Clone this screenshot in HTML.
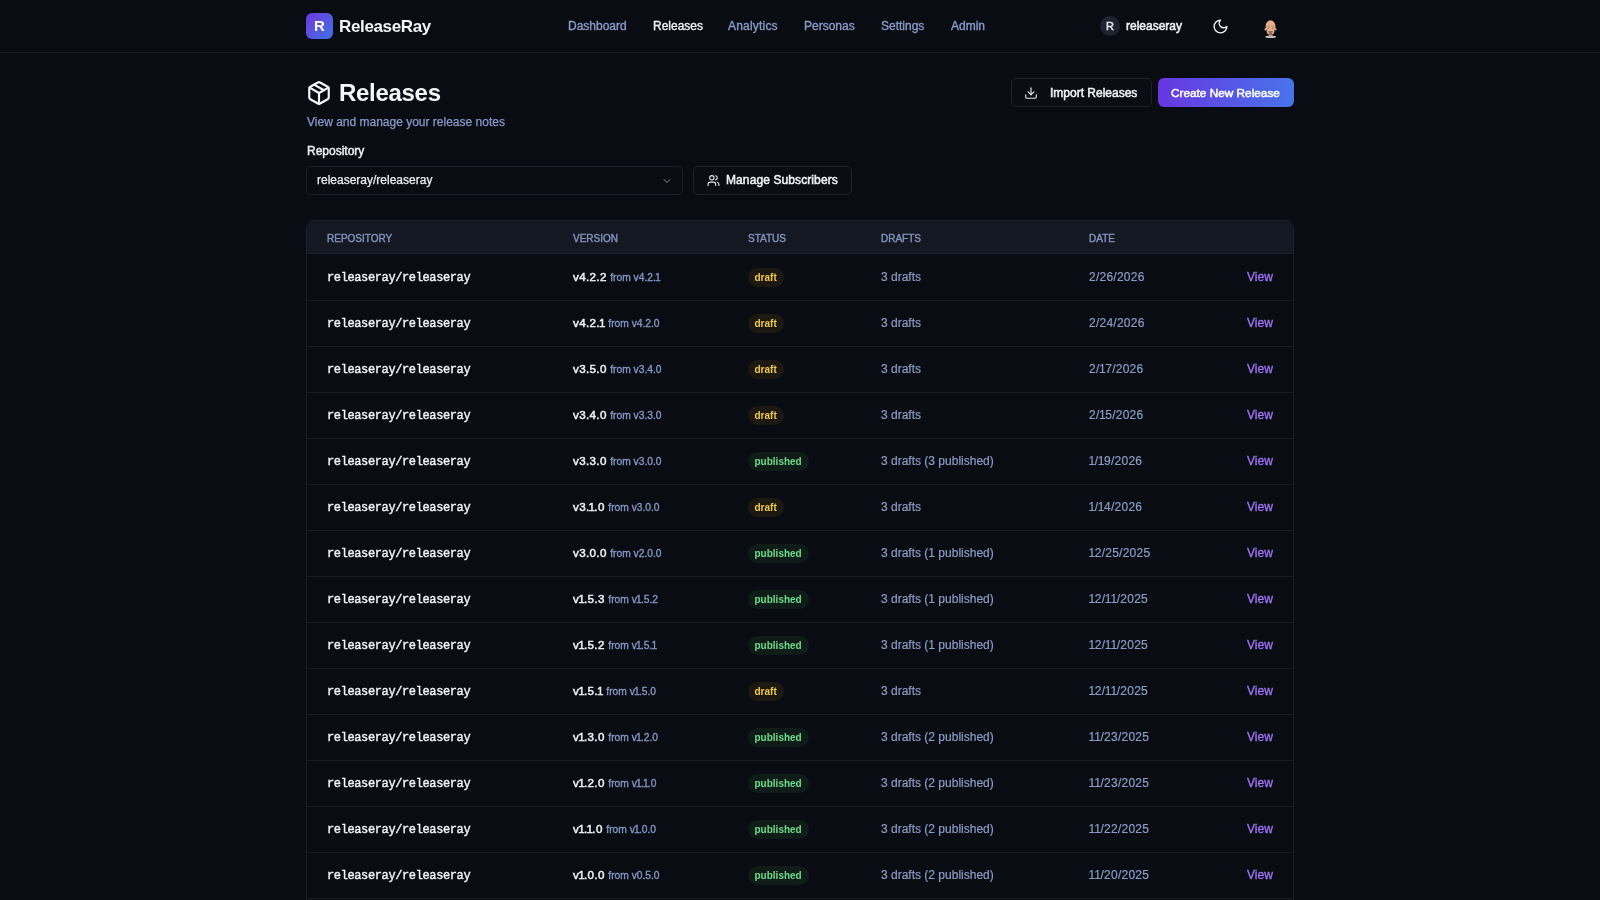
<!DOCTYPE html>
<html><head><meta charset="utf-8">
<style>
*{box-sizing:border-box;margin:0;padding:0}
html,body{width:1600px;height:900px;overflow:hidden;background:#090c13;font-family:"Liberation Sans",sans-serif;color:#f0f1f4}
.wrap{position:absolute;left:0;top:0;width:1600px;height:900px;will-change:transform}
.abs{position:absolute}
.hdr{position:absolute;left:0;top:0;width:1600px;height:53px;border-bottom:1px solid #171b24}
.logo{position:absolute;left:306px;top:13px;width:27px;height:26px;border-radius:6px;background:linear-gradient(135deg,#6f38de,#3f73e6);color:#fff;font-weight:bold;font-size:15px;line-height:26px;text-align:center}
.brand{position:absolute;left:339px;top:15px;font-size:17px;font-weight:bold;line-height:24px;letter-spacing:-0.35px;color:#f4f4f6}
.nav{position:absolute;top:18px;font-size:12px;line-height:16px;color:#8a9cc8;-webkit-text-stroke:0.35px currentColor}
.nav.act{color:#f4f4f6}
.ava{position:absolute;left:1100px;top:16px;width:20px;height:20px;border-radius:50%;background:#1d2330;color:#e4e6ea;font-size:11px;line-height:20px;text-align:center;-webkit-text-stroke:0.5px currentColor}
.uname{position:absolute;left:1126px;top:18px;font-size:12px;line-height:16px;color:#f4f4f6;-webkit-text-stroke:0.5px currentColor}
.title{position:absolute;left:339px;top:79px;font-size:24px;font-weight:bold;line-height:28px;letter-spacing:-0.3px;color:#f6f6f8}
.sub{position:absolute;left:307px;top:115px;font-size:12px;line-height:14px;color:#889bc9;-webkit-text-stroke:0.25px currentColor}
.lbl{position:absolute;left:307px;top:144px;font-size:12px;line-height:14px;color:#eef0f3;-webkit-text-stroke:0.45px currentColor}
.btn{position:absolute;border:1px solid #1f2431;border-radius:5px;background:#0a0d14;font-size:12px;color:#f2f3f5;-webkit-text-stroke:0.5px currentColor}
.sel{position:absolute;left:306px;top:166px;width:377px;height:29px;border:1px solid #1c2130;border-radius:5px;background:#090c13}
.seltxt{position:absolute;left:10px;top:6px;font-size:12px;line-height:14px;color:#eef0f3;-webkit-text-stroke:0.25px currentColor}
.create{position:absolute;left:1158px;top:78px;width:136px;height:29px;border-radius:6px;background:linear-gradient(90deg,#6737e0,#4874eb);font-size:11.8px;color:#fff;-webkit-text-stroke:0.5px currentColor}
.tbl{position:absolute;left:306px;top:220px;width:988px;height:700px;border:1px solid #1a1e29;border-radius:8px;overflow:hidden}
.th{position:absolute;left:0;top:0;width:100%;height:33px;background:#141823;border-bottom:1px solid #1b1f2b}
.thc{position:absolute;top:12px;font-size:10px;line-height:12px;color:#8393bc;-webkit-text-stroke:0.4px currentColor}
.row{position:absolute;left:0;width:100%;height:46px;border-bottom:1px solid #181c26}
.repo{position:absolute;left:20px;top:16px;font-family:"Liberation Mono",monospace;font-size:12px;letter-spacing:-0.38px;line-height:14px;color:#f4f5f7;-webkit-text-stroke:0.4px currentColor}
.ver{position:absolute;left:266px;top:15px;font-size:11.6px;letter-spacing:0.35px;line-height:14px;color:#eef0f3;white-space:nowrap;-webkit-text-stroke:0.5px #eef0f3}
i{font-style:normal;margin:0 -1px}
.ver span i{margin:0 -0.8px}
.date i{margin:0 -0.6px}
.ver span{font-size:10.25px;letter-spacing:0;color:#8597c4;-webkit-text-stroke:0.35px #8597c4}
.badge{position:absolute;left:441px;top:12.5px;height:19px;border-radius:10px;padding:0 7px 0 6.5px;font-size:10px;font-weight:bold;line-height:19px}
.draft{background:#1d1912;color:#f0ca44}
.pub{background:#0f1c17;color:#6bdd8c}
.drf{position:absolute;left:574px;top:15px;font-size:12px;line-height:14px;color:#8c9dc6;-webkit-text-stroke:0.2px currentColor}
.date{position:absolute;left:782px;top:15px;font-size:12px;line-height:14px;color:#8c9dc6;letter-spacing:0.25px;-webkit-text-stroke:0.2px currentColor}
.view{position:absolute;left:940px;top:15px;font-size:12px;line-height:14px;color:#a475fa;-webkit-text-stroke:0.3px currentColor}
</style></head>
<body><div class="wrap">
<div class="hdr"></div>
<div class="logo">R</div>
<div class="brand">ReleaseRay</div>
<div class="nav" style="left:568px">Dashboard</div>
<div class="nav act" style="left:653px">Releases</div>
<div class="nav" style="left:728px;letter-spacing:0.2px">Analytics</div>
<div class="nav" style="left:804px">Personas</div>
<div class="nav" style="left:881px">Settings</div>
<div class="nav" style="left:951px">Admin</div>
<div class="ava">R</div>
<div class="uname">releaseray</div>
<svg class="abs" style="left:1212px;top:17.8px" width="17" height="17" viewBox="0 0 24 24" fill="none" stroke="#f2f2f4" stroke-width="2" stroke-linecap="round" stroke-linejoin="round"><path d="M12 3a6 6 0 0 0 9 9 9 9 0 1 1-9-9Z"/></svg>
<svg class="abs" style="left:1260px;top:17px" width="22" height="24" viewBox="0 0 22 24">
<ellipse cx="10.6" cy="19.8" rx="5.7" ry="1.3" fill="#c4c6c9"/>
<rect x="8.9" y="16" width="3.4" height="3.6" fill="#d39a74"/>
<ellipse cx="5.4" cy="12.2" rx="0.9" ry="1.2" fill="#dca47d"/>
<ellipse cx="15.6" cy="12.2" rx="0.9" ry="1.2" fill="#dca47d"/>
<ellipse cx="10.5" cy="9.2" rx="4.9" ry="6" fill="#e6ae87"/>
<ellipse cx="10.5" cy="13.8" rx="3.9" ry="4" fill="#e6ae87"/>
<rect x="7.2" y="8.3" width="2.5" height="1.8" fill="#b9906f" opacity="0.8"/>
<rect x="11.3" y="8.3" width="2.5" height="1.8" fill="#b9906f" opacity="0.8"/>
<rect x="7.4" y="10.8" width="1.8" height="1.1" fill="#7b868a"/>
<rect x="11.8" y="10.8" width="1.8" height="1.1" fill="#7b868a"/>
<rect x="8.2" y="14.3" width="4.6" height="1" fill="#5e5552"/>
<rect x="9.3" y="15.3" width="2.5" height="2.6" fill="#7d5444" opacity="0.9"/>
</svg>

<svg class="abs" style="left:306px;top:80px" width="26" height="26" viewBox="0 0 24 24" fill="none" stroke="#f6f6f8" stroke-width="2" stroke-linecap="round" stroke-linejoin="round"><path d="m7.5 4.27 9 5.15"/><path d="M21 8a2 2 0 0 0-1-1.73l-7-4a2 2 0 0 0-2 0l-7 4A2 2 0 0 0 3 8v8a2 2 0 0 0 1 1.73l7 4a2 2 0 0 0 2 0l7-4A2 2 0 0 0 21 16Z"/><path d="m3.3 7 8.7 5 8.7-5"/><path d="M12 22V12"/></svg>
<div class="title">Releases</div>
<div class="sub">View and manage your release notes</div>
<div class="lbl">Repository</div>
<div class="sel"><div class="seltxt">releaseray/releaseray</div>
<svg class="abs" style="left:354px;top:8px" width="12" height="12" viewBox="0 0 24 24" fill="none" stroke="#8a909c" stroke-width="2" stroke-linecap="round" stroke-linejoin="round"><path d="m6 9 6 6 6-6"/></svg></div>
<div class="btn" style="left:693px;top:166px;width:159px;height:29px">
<svg class="abs" style="left:13px;top:7px" width="13" height="13" viewBox="0 0 24 24" fill="none" stroke="#e8e9ec" stroke-width="2" stroke-linecap="round" stroke-linejoin="round"><path d="M16 21v-2a4 4 0 0 0-4-4H6a4 4 0 0 0-4 4v2"/><circle cx="9" cy="7" r="4"/><path d="M22 21v-2a4 4 0 0 0-3-3.87"/><path d="M16 3.13a4 4 0 0 1 0 7.75"/></svg>
<div class="abs" style="left:32px;top:6px;line-height:14px;letter-spacing:0.1px">Manage Subscribers</div></div>

<div class="btn" style="left:1011px;top:78px;width:141px;height:29px">
<svg class="abs" style="left:12px;top:7px" width="14" height="14" viewBox="0 0 24 24" fill="none" stroke="#e8e9ec" stroke-width="2" stroke-linecap="round" stroke-linejoin="round"><path d="M21 15v4a2 2 0 0 1-2 2H5a2 2 0 0 1-2-2v-4"/><path d="m7 10 5 5 5-5"/><path d="M12 15V3"/></svg>
<div class="abs" style="left:38px;top:7px;line-height:14px">Import Releases</div></div>
<div class="create"><div class="abs" style="left:13px;top:8px;line-height:14px">Create New Release</div></div>

<div class="tbl">
<div class="th">
<div class="thc" style="left:20px">REPOSITORY</div>
<div class="thc" style="left:266px">VERSION</div>
<div class="thc" style="left:441px">STATUS</div>
<div class="thc" style="left:574px">DRAFTS</div>
<div class="thc" style="left:782px">DATE</div>
</div>
<div class="row" style="top:34px"><div class="repo">releaseray/releaseray</div><div class="ver">v4.2.2 <span>from v4.2.<i>1</i></span></div><div class="badge draft">draft</div><div class="drf">3 drafts</div><div class="date">2/26/2026</div><div class="view">View</div></div>
<div class="row" style="top:80px"><div class="repo">releaseray/releaseray</div><div class="ver">v4.2.<i>1</i> <span>from v4.2.0</span></div><div class="badge draft">draft</div><div class="drf">3 drafts</div><div class="date">2/24/2026</div><div class="view">View</div></div>
<div class="row" style="top:126px"><div class="repo">releaseray/releaseray</div><div class="ver">v3.5.0 <span>from v3.4.0</span></div><div class="badge draft">draft</div><div class="drf">3 drafts</div><div class="date">2/<i>1</i>7/2026</div><div class="view">View</div></div>
<div class="row" style="top:172px"><div class="repo">releaseray/releaseray</div><div class="ver">v3.4.0 <span>from v3.3.0</span></div><div class="badge draft">draft</div><div class="drf">3 drafts</div><div class="date">2/<i>1</i>5/2026</div><div class="view">View</div></div>
<div class="row" style="top:218px"><div class="repo">releaseray/releaseray</div><div class="ver">v3.3.0 <span>from v3.0.0</span></div><div class="badge pub">published</div><div class="drf">3 drafts (3 published)</div><div class="date"><i>1</i>/<i>1</i>9/2026</div><div class="view">View</div></div>
<div class="row" style="top:264px"><div class="repo">releaseray/releaseray</div><div class="ver">v3.<i>1</i>.0 <span>from v3.0.0</span></div><div class="badge draft">draft</div><div class="drf">3 drafts</div><div class="date"><i>1</i>/<i>1</i>4/2026</div><div class="view">View</div></div>
<div class="row" style="top:310px"><div class="repo">releaseray/releaseray</div><div class="ver">v3.0.0 <span>from v2.0.0</span></div><div class="badge pub">published</div><div class="drf">3 drafts (1 published)</div><div class="date"><i>1</i>2/25/2025</div><div class="view">View</div></div>
<div class="row" style="top:356px"><div class="repo">releaseray/releaseray</div><div class="ver">v<i>1</i>.5.3 <span>from v<i>1</i>.5.2</span></div><div class="badge pub">published</div><div class="drf">3 drafts (1 published)</div><div class="date"><i>1</i>2/<i>1</i><i>1</i>/2025</div><div class="view">View</div></div>
<div class="row" style="top:402px"><div class="repo">releaseray/releaseray</div><div class="ver">v<i>1</i>.5.2 <span>from v<i>1</i>.5.<i>1</i></span></div><div class="badge pub">published</div><div class="drf">3 drafts (1 published)</div><div class="date"><i>1</i>2/<i>1</i><i>1</i>/2025</div><div class="view">View</div></div>
<div class="row" style="top:448px"><div class="repo">releaseray/releaseray</div><div class="ver">v<i>1</i>.5.<i>1</i> <span>from v<i>1</i>.5.0</span></div><div class="badge draft">draft</div><div class="drf">3 drafts</div><div class="date"><i>1</i>2/<i>1</i><i>1</i>/2025</div><div class="view">View</div></div>
<div class="row" style="top:494px"><div class="repo">releaseray/releaseray</div><div class="ver">v<i>1</i>.3.0 <span>from v<i>1</i>.2.0</span></div><div class="badge pub">published</div><div class="drf">3 drafts (2 published)</div><div class="date"><i>1</i><i>1</i>/23/2025</div><div class="view">View</div></div>
<div class="row" style="top:540px"><div class="repo">releaseray/releaseray</div><div class="ver">v<i>1</i>.2.0 <span>from v<i>1</i>.<i>1</i>.0</span></div><div class="badge pub">published</div><div class="drf">3 drafts (2 published)</div><div class="date"><i>1</i><i>1</i>/23/2025</div><div class="view">View</div></div>
<div class="row" style="top:586px"><div class="repo">releaseray/releaseray</div><div class="ver">v<i>1</i>.<i>1</i>.0 <span>from v<i>1</i>.0.0</span></div><div class="badge pub">published</div><div class="drf">3 drafts (2 published)</div><div class="date"><i>1</i><i>1</i>/22/2025</div><div class="view">View</div></div>
<div class="row" style="top:632px"><div class="repo">releaseray/releaseray</div><div class="ver">v<i>1</i>.0.0 <span>from v0.5.0</span></div><div class="badge pub">published</div><div class="drf">3 drafts (2 published)</div><div class="date"><i>1</i><i>1</i>/20/2025</div><div class="view">View</div></div>
<div class="row" style="top:678px"><div class="repo">releaseray/releaseray</div><div class="ver">v0.5.0 <span>from v0.4.0</span></div><div class="badge pub">published</div><div class="drf">3 drafts (2 published)</div><div class="date"><i>1</i><i>1</i>/<i>1</i>8/2025</div><div class="view">View</div></div>
</div>
</div></body></html>
